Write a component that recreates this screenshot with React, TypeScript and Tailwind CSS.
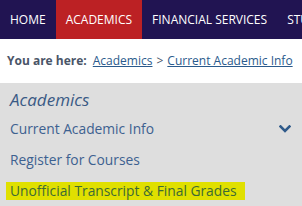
import React from 'react';

const App = () => {
  const navItems = [
    { label: "HOME", active: false },
    { label: "ACADEMICS", active: true },
    { label: "FINANCIAL SERVICES", active: false },
    { label: "STUDENT LIFE", active: false },
  ];

  return (
    <div className="w-[302px] h-[206px] overflow-hidden bg-white font-['Open_Sans',sans-serif]">
      {/* Top nav */}
      <nav className="flex h-[39px] bg-[#211452] whitespace-nowrap">
        {navItems.map((item) => (
          <div
            key={item.label}
            className={
              item.active
                ? "flex items-center pt-[1px] px-[10px] bg-[#bc2124] text-white text-[12px]"
                : "flex items-center pt-[1px] px-[10px] text-white text-[12px]"
            }
          >
            {item.label}
          </div>
        ))}
      </nav>

      {/* Breadcrumb */}
      <div className="h-[44px] flex items-center px-[7px] text-[12px] whitespace-nowrap">
        <span className="font-bold text-[#4a5568]">You are here:</span>
        <a className="ml-[6px] text-[#2a5a8c] underline">Academics</a>
        <span className="mx-[4px] text-[#4a5568]">&gt;</span>
        <a className="text-[#2a5a8c] underline">Current Academic Info</a>
      </div>

      {/* Side menu */}
      <div className="bg-[#dedede] h-[123px] px-[10px] pt-[5px] whitespace-nowrap">
        <div className="italic text-[17px] text-[#3a5a85] leading-[24px]">Academics</div>
        <div className="flex items-center justify-between mt-[7px] h-[20px]">
          <span className="text-[13.8px] text-[#3d6190]">Current Academic Info</span>
          <svg width="12" height="8" viewBox="0 0 12 8" className="mr-[1px]">
            <path d="M1.5 1.5 L6 6 L10.5 1.5" fill="none" stroke="#2f5a8a" strokeWidth="2.6" strokeLinecap="square" />
          </svg>
        </div>
        <div className="mt-[11px] h-[20px] flex items-center text-[13.8px] text-[#3d6190]">Register for Courses</div>
        <div className="mt-[12px] -ml-[4px] w-fit bg-[#e0e000] pl-[4px] pr-[8px] h-[18px] flex items-center text-[13.8px] text-[#3d6a35]">
          Unofficial Transcript &amp; Final Grades
        </div>
      </div>
    </div>
  );
};

export default App;
